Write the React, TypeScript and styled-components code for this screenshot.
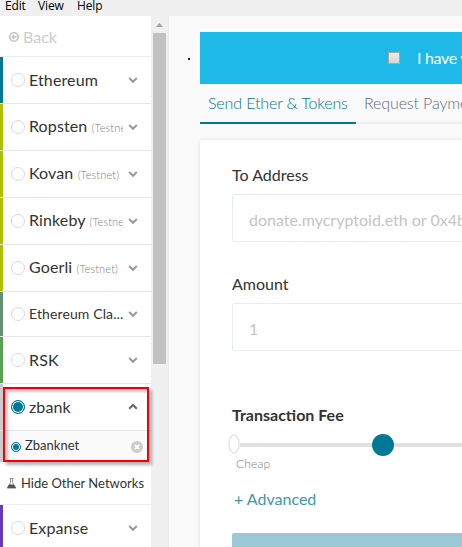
import React from "react";
import styled, { createGlobalStyle } from "styled-components";

const GlobalStyle = createGlobalStyle`
  * { box-sizing: border-box; }
  html, body { margin: 0; height: 100%; overflow: hidden; }
  body { font-family: Lato, "Open Sans", sans-serif; color: #333; background: #fafafa; }
  #root { height: 100%; }
`;

const Window = styled.div`
  display: flex;
  flex-direction: column;
  width: 462px;
  height: 547px;
  overflow: hidden;
`;

const MenuBar = styled.nav`
  flex: none;
  display: flex;
  gap: 13px;
  height: 16px;
  padding-left: 5px;
  background: #f0f0f0;
  color: #000;
  font: 12px/12px "Open Sans", sans-serif;
  letter-spacing: -0.15px;
`;

const MenuItem = styled.span<{ $width: number }>`
  width: ${(p) => p.$width}px;
  white-space: nowrap;
`;

const Body = styled.div`
  flex: 1;
  display: flex;
  min-height: 0;
`;

const Sidebar = styled.aside`
  position: relative;
  flex: none;
  width: 151px;
  background: #fff;
`;

const BackRow = styled.div`
  display: flex;
  align-items: center;
  height: 41px;
  padding: 1px 0 0 9px;
  gap: 4px;
  border-bottom: 1px solid #ececec;
  color: #ccc;
  font-size: 16px;
`;

const NetworkRow = styled.div<{ $bar: string; $height?: number }>`
  display: flex;
  align-items: center;
  height: ${(p) => p.$height ?? 47}px;
  padding: 0 13px 0 8px;
  border-bottom: 1px solid #e6e6e6;
  background: linear-gradient(${(p) => p.$bar}, ${(p) => p.$bar}) left / 3px 100% no-repeat;
`;

const Radio = styled.span<{ $on?: boolean; $small?: boolean }>`
  flex: none;
  width: ${(p) => (p.$small ? 10 : 14)}px;
  height: ${(p) => (p.$small ? 10 : 14)}px;
  margin: 0 4px 0 3px;
  border: 1px solid ${(p) => (p.$on ? "#007896" : "#d8d8d8")};
  border-radius: 50%;
  background: ${(p) => (p.$on ? "#007896" : "#fff")};
  box-shadow: inset 0 0 0 1px #fff;
`;

const NetworkName = styled.span<{ $size?: number }>`
  width: 94px;
  overflow: hidden;
  white-space: nowrap;
  font-size: ${(p) => p.$size ?? 16}px;
  letter-spacing: 0.12px;
  line-height: 22px;
`;

const Tag = styled.small`
  color: #808080;
  font-size: 11px;
  font-weight: 300;
`;

const ChevronIcon = styled.svg`
  flex: none;
  width: 10px;
  height: 8px;
  margin-left: 5px;
`;

const SubRow = styled.div`
  display: flex;
  align-items: center;
  height: 31px;
  padding: 0 8px;
  background: linear-gradient(#ccc, #ccc) left / 3px 100% no-repeat #fafafa;
  font-size: 13px;
`;

const SubName = styled.span`
  flex: 1;
  padding-bottom: 3px;
`;

const HideRow = styled.div`
  display: flex;
  align-items: center;
  gap: 4px;
  height: 43px;
  padding-left: 6px;
  border-bottom: 1px solid #ececec;
  font-size: 13px;
  white-space: nowrap;
`;

const Highlight = styled.div`
  position: absolute;
  left: 3px;
  top: 371px;
  width: 146px;
  height: 75px;
  border: 2px solid #f00008;
  box-shadow: 3px 3px 3px rgba(0, 0, 0, 0.3), inset 3px 3px 3px rgba(0, 0, 0, 0.22);
`;

const Scrollbar = styled.div`
  flex: none;
  display: flex;
  flex-direction: column;
  align-items: center;
  width: 18px;
  padding-right: 1px;
  border-right: 1px solid #ebebeb;
  background: #f0f0f0;
`;

const ScrollArrow = styled.svg`
  width: 7px;
  height: 4px;
  margin: 7px 0 6px;
`;

const ScrollThumb = styled.div`
  width: 13px;
  height: 331px;
  background: #c1c1c1;
`;

const Main = styled.main`
  flex: 1;
  display: flex;
  align-items: flex-start;
  min-width: 0;
  padding-top: 16px;
  background: #fafafa;
  overflow: hidden;
`;

const Bullet = styled.span`
  flex: none;
  width: 2px;
  height: 2px;
  margin: 26px 10px 0 19px;
  background: #222;
`;

const Content = styled.div`
  flex: none;
  width: 420px;
`;

const Banner = styled.div`
  display: flex;
  align-items: center;
  height: 52px;
  padding: 0 0 2px 188px;
  gap: 17px;
  background: #1eb8e9;
  color: #fff;
  font-size: 16px;
  letter-spacing: -0.3px;
  white-space: nowrap;
`;

const Checkbox = styled.span`
  width: 12px;
  height: 12px;
  margin-top: 2px;
  border: 1px solid #a9a6a3;
  background: linear-gradient(#ececec, #d7d7d7);
`;

const Tabs = styled.div`
  display: flex;
  height: 40px;
  box-shadow: inset 0 -2px #eee;
`;

const Tab = styled.span<{ $active?: boolean; $width: number }>`
  width: ${(p) => p.$width}px;
  padding: 8px 0 0 8px;
  border-bottom: 2px solid ${(p) => (p.$active ? "#007896" : "transparent")};
  color: ${(p) => (p.$active ? "#007896" : "#5d6b85")};
  font-size: 16px;
  font-weight: 300;
  letter-spacing: -0.13px;
  line-height: 22px;
  white-space: nowrap;
`;

const Card = styled.section`
  height: 460px;
  margin-top: 16px;
  padding: 24px 32px 0;
  border-radius: 2px;
  background: #fff;
  box-shadow: 0 0 4px rgba(0, 0, 0, 0.11);
`;

const Label = styled.div<{ $bold?: boolean }>`
  font-size: 16px;
  font-weight: ${(p) => (p.$bold ? 700 : 400)};
  line-height: 22px;
`;

const Input = styled.div`
  height: 48px;
  margin: 8px 0 31px;
  padding: 1px 16px 0;
  border: 1px solid #e5ecf5;
  border-radius: 2px;
  color: #c4c4c4;
  font-size: 16px;
  line-height: 48px;
  white-space: nowrap;
`;

const FeeSection = styled.div`
  margin-top: 53px;
`;

const Slider = styled.div`
  display: flex;
  align-items: center;
  height: 22px;
  margin: 8px 0 0 -4px;
`;

const SliderStart = styled.span`
  width: 12px;
  height: 20px;
  margin-bottom: 2px;
  border: 2px solid #e9e9e9;
  border-radius: 50%;
  background: #fff;
`;

const Rail = styled.span<{ $width: number }>`
  width: ${(p) => p.$width}px;
  height: 4px;
  background: #e0e0e0;
`;

const Knob = styled.span`
  width: 22px;
  height: 22px;
  border-radius: 50%;
  background: #007896;
`;

const Cheap = styled.div`
  padding-left: 4px;
  color: #808080;
  font-size: 12px;
  font-weight: 300;
  letter-spacing: 0.15px;
  line-height: 16px;
`;

const Advanced = styled.div`
  margin: 16px 0 23px;
  padding-left: 2px;
  color: #3c97ad;
  font-size: 16px;
  line-height: 22px;
`;

const SendButton = styled.div`
  height: 50px;
  border-radius: 2px;
  background: #9ac9d5;
`;

const Chevron = ({ up = false }: { up?: boolean }) => (
  <ChevronIcon viewBox="0 0 10 8">
    <path d={up ? "M1.2 5.8 5 2 8.8 5.8" : "M1.2 2 5 5.8 8.8 2"} fill="none" stroke={up ? "#666" : "#999"} strokeWidth="2" />
  </ChevronIcon>
);

type Network = { name: string; bar: string; testnet?: boolean; height?: number; size?: number };

const networks: Network[] = [
  { name: "Ethereum", bar: "#007896" },
  { name: "Ropsten", bar: "#adc101", testnet: true },
  { name: "Kovan", bar: "#adc101", testnet: true },
  { name: "Rinkeby", bar: "#adc101", testnet: true },
  { name: "Goerli", bar: "#adc101", testnet: true },
  { name: "Ethereum Cla...", bar: "#669073", height: 45, size: 14 },
  { name: "RSK", bar: "#58a052" },
];

const Row = ({ name, bar, testnet, height, size }: Network) => (
  <NetworkRow $bar={bar} $height={height}>
    <Radio />
    <NetworkName $size={size}>
      {name} {testnet && <Tag>(Testnet)</Tag>}
    </NetworkName>
    <Chevron />
  </NetworkRow>
);

export default function App() {
  return (
    <>
      <GlobalStyle />
      <Window>
        <MenuBar>
          <MenuItem $width={20}>Edit</MenuItem>
          <MenuItem $width={26}>View</MenuItem>
          <MenuItem $width={25}>Help</MenuItem>
        </MenuBar>
        <Body>
          <Sidebar>
            <BackRow>
              <svg width="10" height="10" viewBox="0 0 10 10">
                <circle cx="5" cy="5" r="4.2" fill="none" stroke="#c4c4c4" strokeWidth="1.6" />
                <path d="M7.6 5H3.2M5.2 2.9 3.1 5l2.1 2.1" fill="none" stroke="#c4c4c4" strokeWidth="1.3" />
              </svg>
              Back
            </BackRow>
            {networks.map((n) => (
              <Row key={n.name} {...n} />
            ))}
            <NetworkRow $bar="#ccc">
              <Radio $on />
              <NetworkName>zbank</NetworkName>
              <Chevron up />
            </NetworkRow>
            <SubRow>
              <Radio $on $small />
              <SubName>Zbanknet</SubName>
              <svg width="12" height="12" viewBox="0 0 12 12">
                <circle cx="6" cy="6" r="6" fill="#ccc" />
                <path d="m3.8 3.8 4.4 4.4M8.2 3.8 3.8 8.2" stroke="#fff" strokeWidth="1.8" />
              </svg>
            </SubRow>
            <HideRow>
              <svg width="11" height="11" viewBox="0 0 11 11">
                <path d="M3.5 .5h4M4.5 .5v4L1.4 9.8h8.2L6.5 4.5v-4" fill="none" stroke="#888" strokeWidth=".9" />
                <path d="M3 6.5h5l2 3.8H1z" fill="#555" />
              </svg>
              Hide Other Networks
            </HideRow>
            <Row name="Expanse" bar="#673ab7" />
            <Highlight />
          </Sidebar>
          <Scrollbar>
            <ScrollArrow viewBox="0 0 7 4">
              <path d="M0 4 3.5 0 7 4z" fill="#a3a3a3" />
            </ScrollArrow>
            <ScrollThumb />
          </Scrollbar>
          <Main>
            <Bullet />
            <Content>
              <Banner>
                <Checkbox />
                <span>I have your</span>
              </Banner>
              <Tabs>
                <Tab $active $width={156}>Send Ether &amp; Tokens</Tab>
                <Tab $width={140}>Request Payment</Tab>
              </Tabs>
              <Card>
                <Label>To Address</Label>
                <Input>donate.mycryptoid.eth or 0x4bbeEB066eD09</Input>
                <Label>Amount</Label>
                <Input>1</Input>
                <FeeSection>
                  <Label $bold>Transaction Fee</Label>
                  <Slider>
                    <SliderStart />
                    <Rail $width={132} />
                    <Knob />
                    <Rail $width={160} />
                  </Slider>
                  <Cheap>Cheap</Cheap>
                  <Advanced>+ Advanced</Advanced>
                  <SendButton />
                </FeeSection>
              </Card>
            </Content>
          </Main>
        </Body>
      </Window>
    </>
  );
}
